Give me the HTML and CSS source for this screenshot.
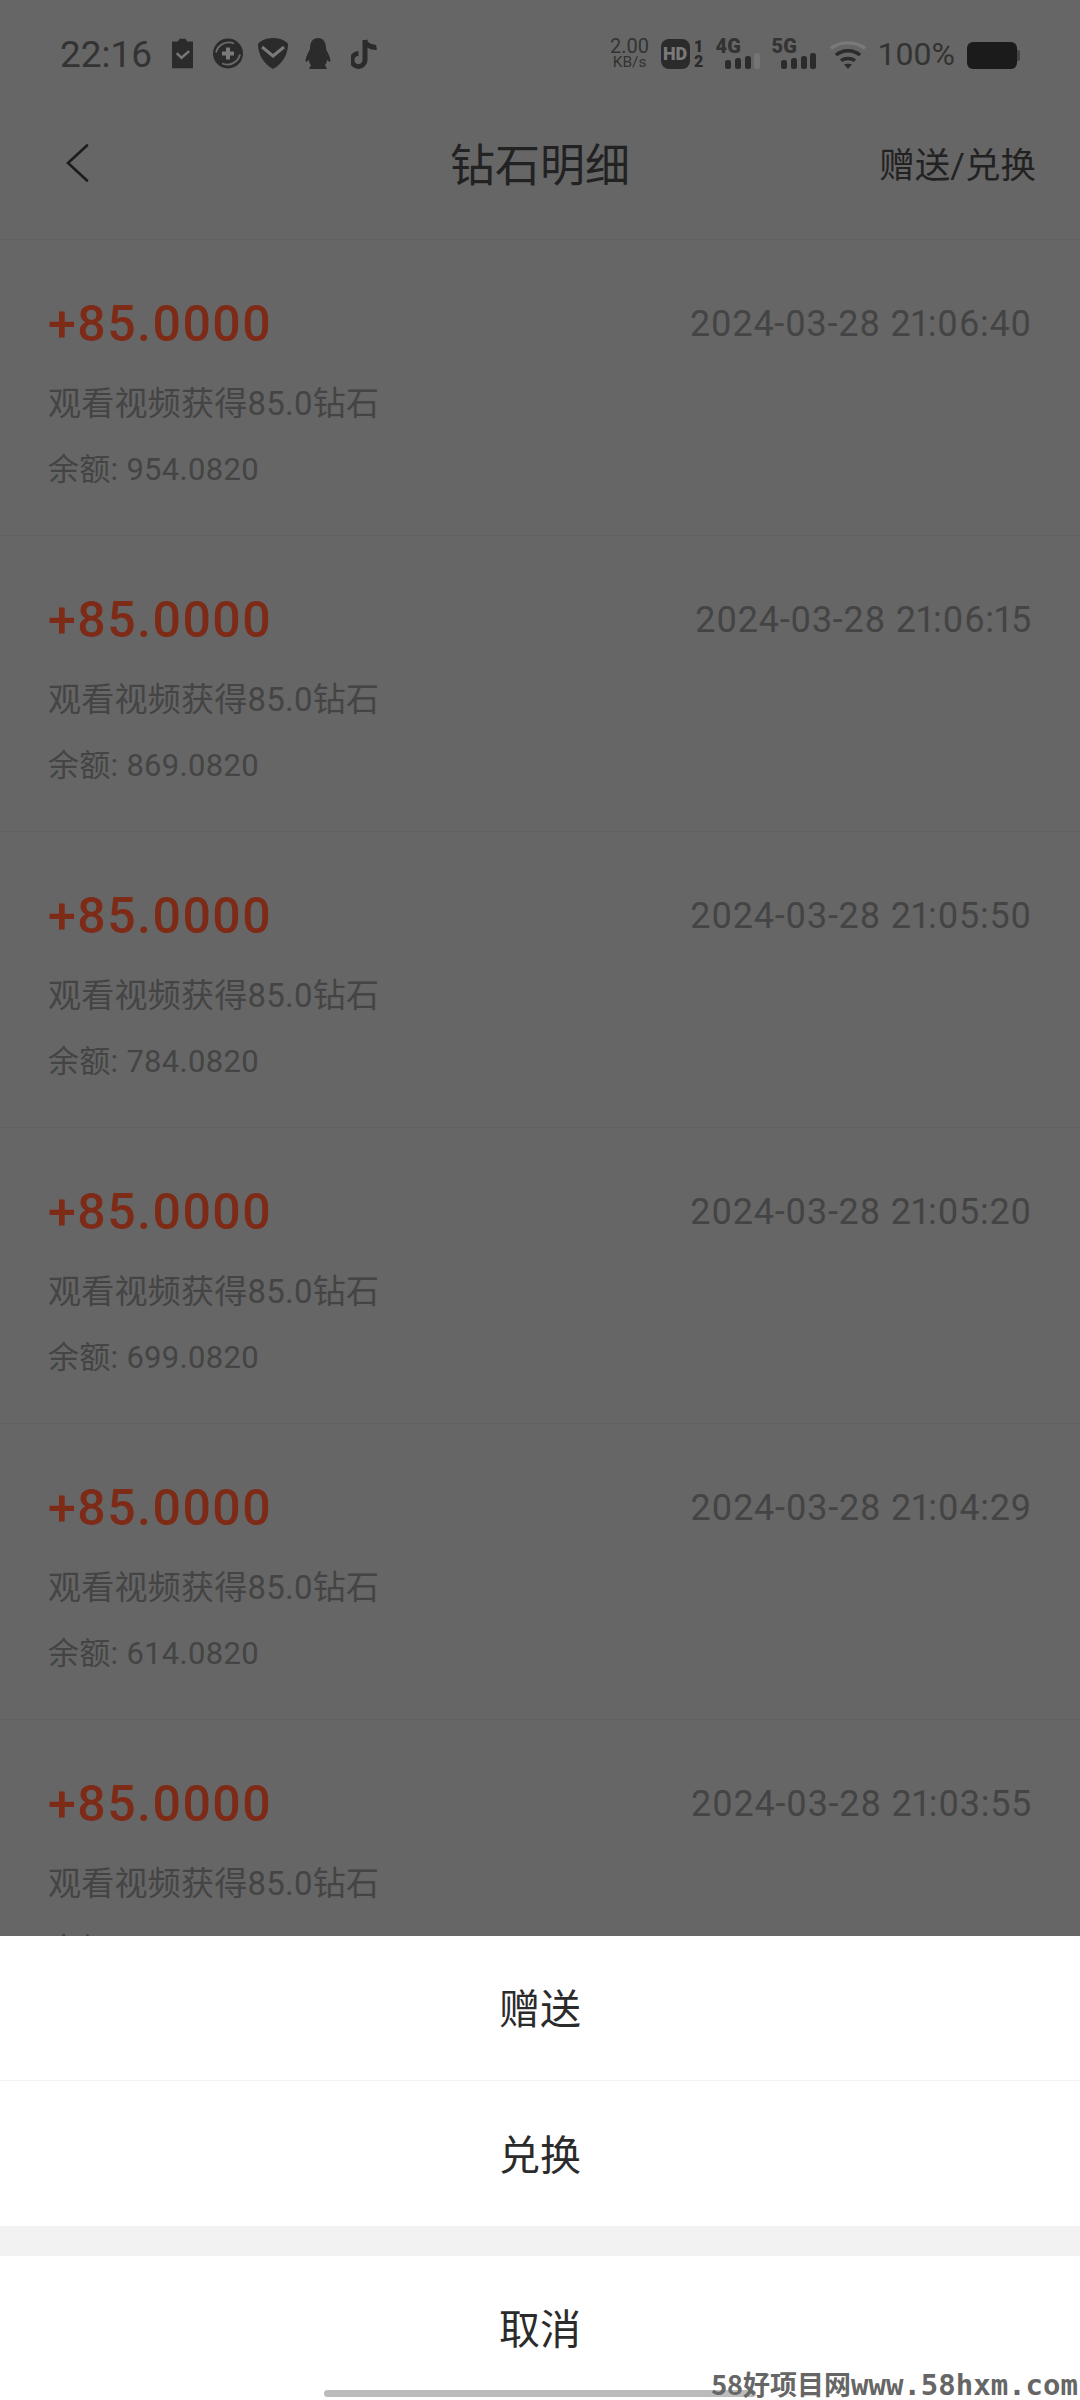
FILE: index.html
```html
<!DOCTYPE html>
<html lang="zh">
<head>
<meta charset="utf-8">
<title>钻石明细</title>
<link rel="stylesheet" href="styles.css">
</head>
<body>
<div class="page">
  <div class="status">
    <div class="status-left">
      <span class="clock">22:16</span>
      <svg class="ic ic-clip" viewBox="0 0 22 31"><path d="M0 3h6l2-3h6l2 3h6v28H0z" fill="#2b2b2b"/><path d="M5 15l5 5 8-7" fill="none" stroke="#777" stroke-width="2.6"/></svg>
      <svg class="ic ic-round" viewBox="0 0 30 30"><circle cx="15" cy="15" r="15" fill="#2b2b2b"/><path d="M3 14C5 6 13 2 21 5 M27 16c-2 8-10 12-18 9" fill="none" stroke="#6c6c6c" stroke-width="1.8"/><path d="M13 9h4v4h4v4h-4v4h-4v-4H9v-4h4z" fill="#7a7a7a"/></svg>
      <svg class="ic ic-shield" viewBox="0 0 30 31"><path d="M15 0c6 0 12 2 15 6 0 11-6 20-15 25C6 26 0 17 0 6c3-4 9-6 15-6z" fill="#2b2b2b"/><path d="M4 9l11 9 11-9" fill="none" stroke="#7a7a7a" stroke-width="3"/></svg>
      <svg class="ic ic-qq" viewBox="0 0 26 31"><path d="M13 0c5 0 8 4 8 10 0 2 1 3 2 5 2 4 3 8 2 9l-3-2c0 2-1 4-2 5l2 4H4l2-4c-1-1-2-3-2-5l-3 2c-1-1 0-5 2-9 1-2 2-3 2-5 0-6 3-10 8-10z" fill="#2b2b2b"/></svg>
      <svg class="ic ic-tok" viewBox="0 0 26 31"><path d="M14 2v20a6.500 6.500 0 1 1-6.500-6.500" fill="none" stroke="#2b2b2b" stroke-width="5"/><path d="M15 0c1 4 4 6 10 7l1 5c-4 0-9-1-11-4z" fill="#2b2b2b"/></svg>
    </div>
    <div class="status-right">
      <span class="speed"><span class="speed-n">2.00</span><span class="speed-u">KB/s</span></span>
      <span class="hd"><span class="hd-box">HD</span><span class="hd-n"><b>1</b><b>2</b></span></span>
      <span class="net"><b>4G</b>
        <svg viewBox="0 0 35 16" class="bars"><rect x="0" y="7" width="6" height="9" rx="2.500" fill="#2b2b2b"/><rect x="10" y="5" width="6" height="11" rx="2.500" fill="#2b2b2b"/><rect x="20" y="3" width="6" height="13" rx="2.500" fill="#2b2b2b"/><rect x="29" y="0" width="6" height="16" rx="2.500" fill="#757575"/></svg>
      </span>
      <span class="net"><b>5G</b>
        <svg viewBox="0 0 35 16" class="bars"><rect x="0" y="7" width="6" height="9" rx="2.500" fill="#2b2b2b"/><rect x="10" y="5" width="6" height="11" rx="2.500" fill="#2b2b2b"/><rect x="20" y="3" width="6" height="13" rx="2.500" fill="#2b2b2b"/><rect x="29" y="0" width="6" height="16" rx="2.500" fill="#2b2b2b"/></svg>
      </span>
      <svg class="wifi" viewBox="0 0 36 30" preserveAspectRatio="none"><path d="M1 8C10 0 26 0 35 8" fill="none" stroke="#7a7a7a" stroke-width="3.600"/><path d="M6 15c7-6 17-6 24 0" fill="none" stroke="#2b2b2b" stroke-width="3.600"/><path d="M11 21c4-3 10-3 14 0" fill="none" stroke="#2b2b2b" stroke-width="3.600"/><path d="M14 25c2-1 6-1 8 0l-4 5z" fill="#2b2b2b"/></svg>
      <span class="pct">100%</span>
      <span class="batt"><span class="batt-body"></span><span class="batt-tip"></span></span>
    </div>
  </div>
  <div class="nav">
    <svg class="back" viewBox="0 0 24 38"><path d="M22 1.500L3 19l19 17.500" fill="none" stroke="#1c1c1c" stroke-width="2.600" stroke-linecap="round"/></svg>
    <span class="title">钻石明细</span>
    <span class="action">赠送/兑换</span>
  </div>
  <div class="list">
    <div class="row"><div class="row-top"><span class="amt">+85.0000</span><span class="time">2024-03-28 21:06:40</span></div><div class="desc">观看视频获得85.0钻石</div><div class="bal">余额: 954.0820</div></div>
    <div class="row"><div class="row-top"><span class="amt">+85.0000</span><span class="time">2024-03-28 21:06:15</span></div><div class="desc">观看视频获得85.0钻石</div><div class="bal">余额: 869.0820</div></div>
    <div class="row"><div class="row-top"><span class="amt">+85.0000</span><span class="time">2024-03-28 21:05:50</span></div><div class="desc">观看视频获得85.0钻石</div><div class="bal">余额: 784.0820</div></div>
    <div class="row"><div class="row-top"><span class="amt">+85.0000</span><span class="time">2024-03-28 21:05:20</span></div><div class="desc">观看视频获得85.0钻石</div><div class="bal">余额: 699.0820</div></div>
    <div class="row"><div class="row-top"><span class="amt">+85.0000</span><span class="time">2024-03-28 21:04:29</span></div><div class="desc">观看视频获得85.0钻石</div><div class="bal">余额: 614.0820</div></div>
    <div class="row"><div class="row-top"><span class="amt">+85.0000</span><span class="time">2024-03-28 21:03:55</span></div><div class="desc">观看视频获得85.0钻石</div><div class="bal">余额: 529.0820</div></div>
  </div>
  <div class="sheet">
    <div class="opt opt-line">赠送</div>
    <div class="opt">兑换</div>
    <div class="band"></div>
    <div class="opt opt-cancel">取消</div>
    <div class="foot"><span class="home"></span><span class="mark"><span class="mark-cn">58好项目网</span>www.58hxm.com</span></div>
  </div>
</div>
</body>
</html>
```
FILE: styles.css
```css
* { box-sizing: border-box; }
html, body { margin: 0; padding: 0; }
body { font-family: Roboto, "Noto Sans CJK SC", sans-serif; }
.page { width: 1080px; height: 2400px; background: #666; display: flex; flex-direction: column; overflow: hidden; }
.status { height: 108px; flex: none; padding: 38px 60px 0 60px; display: flex; justify-content: space-between; align-items: flex-start; }
.status-left { display: flex; align-items: center; height: 31px; }
.clock { font-size: 37px; color: #333; line-height: 31px; width: 112px; padding-top: 2px; }
.ic { height: 31px; display: block; flex: none; }
.ic-clip { width: 21px; margin-right: 20px; }
.ic-round { width: 30px; margin-right: 15px; }
.ic-shield { width: 30px; margin-right: 17px; }
.ic-qq { width: 26px; margin-right: 20px; }
.ic-tok { width: 26px; }
.status-right { display: flex; align-items: flex-start; height: 31px; color: #2b2b2b; }
.speed { display: flex; flex-direction: column; align-items: center; width: 38px; margin: 1px 12px 0 0; color: #333; }
.speed-n { font-size: 20px; line-height: 15px; }
.speed-u { font-size: 15.500px; line-height: 15px; margin-top: 1px; }
.hd { display: flex; align-items: stretch; height: 30px; margin: 1px 12px 0 0; }
.hd-box { width: 29px; height: 30px; background: #2b2b2b; color: #7a7a7a; border-radius: 8px; font: 900 18px/30px Roboto, sans-serif; text-align: center; }
.hd-n { display: flex; flex-direction: column; margin-left: 4px; width: 10px; }
.hd-n b { font: 900 16px/15px Roboto, sans-serif; color: #2b2b2b; text-align: center; }
.net { position: relative; width: 44px; height: 30px; margin: 1px 12px 0 0; display: block; }
.net b { position: absolute; left: 0; top: 0; font: 900 20px/15px Roboto, sans-serif; color: #333; }
.bars { position: absolute; right: 0; bottom: 0; width: 35px; height: 16px; }
.wifi { width: 36px; height: 28px; margin: 3px 12px 0 2px; flex: none; }
.pct { font-size: 32px; line-height: 32px; color: #333; margin-right: 12px; }
.batt { display: flex; align-items: center; margin-top: 4px; }
.batt-body { width: 50px; height: 27px; border-radius: 6px; background: #1b1b1b; }
.batt-tip { width: 3px; height: 11px; border-radius: 0 2px 2px 0; background: #444; }
.nav { height: 132px; flex: none; display: grid; grid-template-columns: 1fr auto 1fr; align-items: center; padding: 0 44px 22px 44px; border-bottom: 1px solid #606060; }
.back { width: 24px; height: 38px; display: block; margin-left: 21px; }
.title { font-size: 45px; color: #222; }
.action { font-size: 35.500px; color: #222; justify-self: end; }
.list { flex: 1; min-height: 0; overflow: hidden; }
.row { height: 296px; padding: 49px 48px 0 48px; border-bottom: 1px solid #606060; }
.row-top { display: flex; justify-content: space-between; align-items: center; height: 70px; margin-bottom: 21px; }
.amt { font-size: 50px; font-weight: 500; color: #7d2a17; letter-spacing: 1.500px; }
.time { font-size: 36px; color: #444; letter-spacing: .7px; font-variant-numeric: proportional-nums; }
.desc { font-size: 33px; line-height: 48px; color: #444; letter-spacing: .25px; }
.bal { font-size: 31px; line-height: 48px; margin-top: 18px; color: #444; letter-spacing: .3px; }
.sheet { flex: none; height: 464px; background: #fff; display: flex; flex-direction: column; }
.opt { height: 145px; flex: none; display: flex; align-items: center; justify-content: center; font-size: 41px; color: #2b2b2b; padding-bottom: 4px; }
.opt-line { border-bottom: 1px solid #f2f2f2; }
.band { height: 30px; flex: none; background: #f2f2f2; }
.opt-cancel { height: 130px; padding: 10px 0 0; }
.foot { flex: 1; position: relative; }
.home { position: absolute; left: 324px; top: 4px; width: 432px; height: 7px; border-radius: 4px; background: #bbb; }
.mark { position: absolute; right: 2px; bottom: 0; font: 700 29px/30px "DejaVu Sans Mono", "Noto Sans CJK SC", monospace; color: #666; white-space: nowrap; }
.mark-cn { font: 700 27px/30px "Noto Sans CJK SC", sans-serif; }
```
